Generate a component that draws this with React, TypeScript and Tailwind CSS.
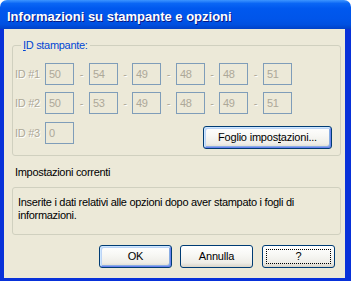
import React from 'react';

const rows = [
  { label: 'ID #1', values: ['50', '54', '49', '48', '48', '51'] },
  { label: 'ID #2', values: ['50', '53', '49', '48', '49', '51'] },
];

const font = "font-['Liberation_Sans',Arial,sans-serif]";

function IdBox({ value }: { value: string }) {
  return (
    <div className="w-[29px] h-[22px] border border-[#7F9DB9] bg-[#ECE9D8] pl-[3px] flex items-center text-[#ACA899] text-[11px] leading-[13px]">
      {value}
    </div>
  );
}

function XpButton({
  children,
  className = '',
  variant = 'normal',
}: {
  children: React.ReactNode;
  className?: string;
  variant?: 'normal' | 'default' | 'focus';
}) {
  return (
    <button
      className={`relative h-[23px] rounded-[3px] border border-[#003C74] bg-[linear-gradient(180deg,#FFFFFF_0%,#F8F8F5_40%,#EEEDE7_80%,#D9D4C8_100%)] text-[11px] leading-[13px] text-black tracking-[-0.2px] ${
        variant === 'default'
          ? 'shadow-[inset_1px_1px_0_#CEE7FF,inset_-1px_-1px_0_#6982EE,inset_2px_2px_0_#BCD4F6,inset_-2px_-2px_0_#89ADE4]'
          : ''
      } ${className}`}
    >
      {variant === 'focus' && (
        <span className="absolute inset-[3px] border border-dotted border-black"></span>
      )}
      {children}
    </button>
  );
}

export default function App() {
  return (
    <div className={`w-[351px] h-[281px] bg-white ${font}`}>
      <div className="w-full h-full flex flex-col rounded-t-[7px] overflow-hidden">
        {/* Title bar */}
        <div className="h-[29px] shrink-0 flex items-center pl-[7px] pt-[3px] bg-[linear-gradient(180deg,#3D95FF_0%,#0A66F5_12%,#0058EE_30%,#0055EA_65%,#0050E0_85%,#0041C7_100%)]">
          <span className="text-white font-bold text-[13px] leading-[15px] [text-shadow:1px_1px_0_#0A1883]">
            Informazioni su stampante e opzioni
          </span>
        </div>

        {/* Body with window borders */}
        <div className="flex-1 flex bg-[#0831D9] pl-[4px] pr-[6px] pb-[3px]">
          <div className="flex-1 bg-[#ECE9D8] pl-[8px] pt-[10px] flex flex-col text-[11px] leading-[13px] tracking-[-0.3px]">
            {/* ID stampante group */}
            <fieldset className="w-[329px] border border-[#D0D0BF] rounded-[3px] pl-[2px] pr-[8px] pb-[6px]">
              <legend className="ml-[6px] px-[2px] text-[#0046D5]">
                <span className="underline">I</span>D stampante:
              </legend>
              {rows.map((row, r) => (
                <div key={row.label} className={`flex items-center ${r === 0 ? 'mt-[11px]' : 'mt-[7px]'}`}>
                  <span className="w-[30px] text-[#ACA899] [text-shadow:1px_1px_0_#fff]">{row.label}</span>
                  {row.values.map((v, i) => (
                    <React.Fragment key={i}>
                      {i > 0 && (
                        <span
                          className={`${i % 2 === 1 ? 'w-[15px]' : 'w-[14px]'} text-center text-[#ACA899] [text-shadow:1px_1px_0_#fff]`}
                        >
                          -
                        </span>
                      )}
                      <IdBox value={v} />
                    </React.Fragment>
                  ))}
                </div>
              ))}
              <div className="flex items-start mt-[8px]">
                <span className="w-[30px] h-[22px] flex items-center text-[#ACA899] [text-shadow:1px_1px_0_#fff]">
                  ID #3
                </span>
                <IdBox value="0" />
                <XpButton variant="default" className="ml-auto mt-[4px] w-[129px]">
                  Foglio impos<span className="underline">t</span>azioni...
                </XpButton>
              </div>
            </fieldset>

            {/* Current settings */}
            <div className="mt-[10px] pl-[3px] text-black">Impostazioni correnti</div>
            <div className="mt-[8px] w-[329px] h-[48px] border border-[#D0D0BF] rounded-[3px] pl-[5px] pr-[8px] pt-[8px] text-black">
              Inserite i dati relativi alle opzioni dopo aver stampato i fogli di informazioni.
            </div>

            {/* Buttons */}
            <div className="mt-[10px] flex justify-end gap-2 pr-[10px]">
              <XpButton variant="default" className="w-[73px]">OK</XpButton>
              <XpButton className="w-[73px]">Annulla</XpButton>
              <XpButton variant="focus" className="w-[73px] ml-[1px]">?</XpButton>
            </div>
          </div>
        </div>
      </div>
    </div>
  );
}
